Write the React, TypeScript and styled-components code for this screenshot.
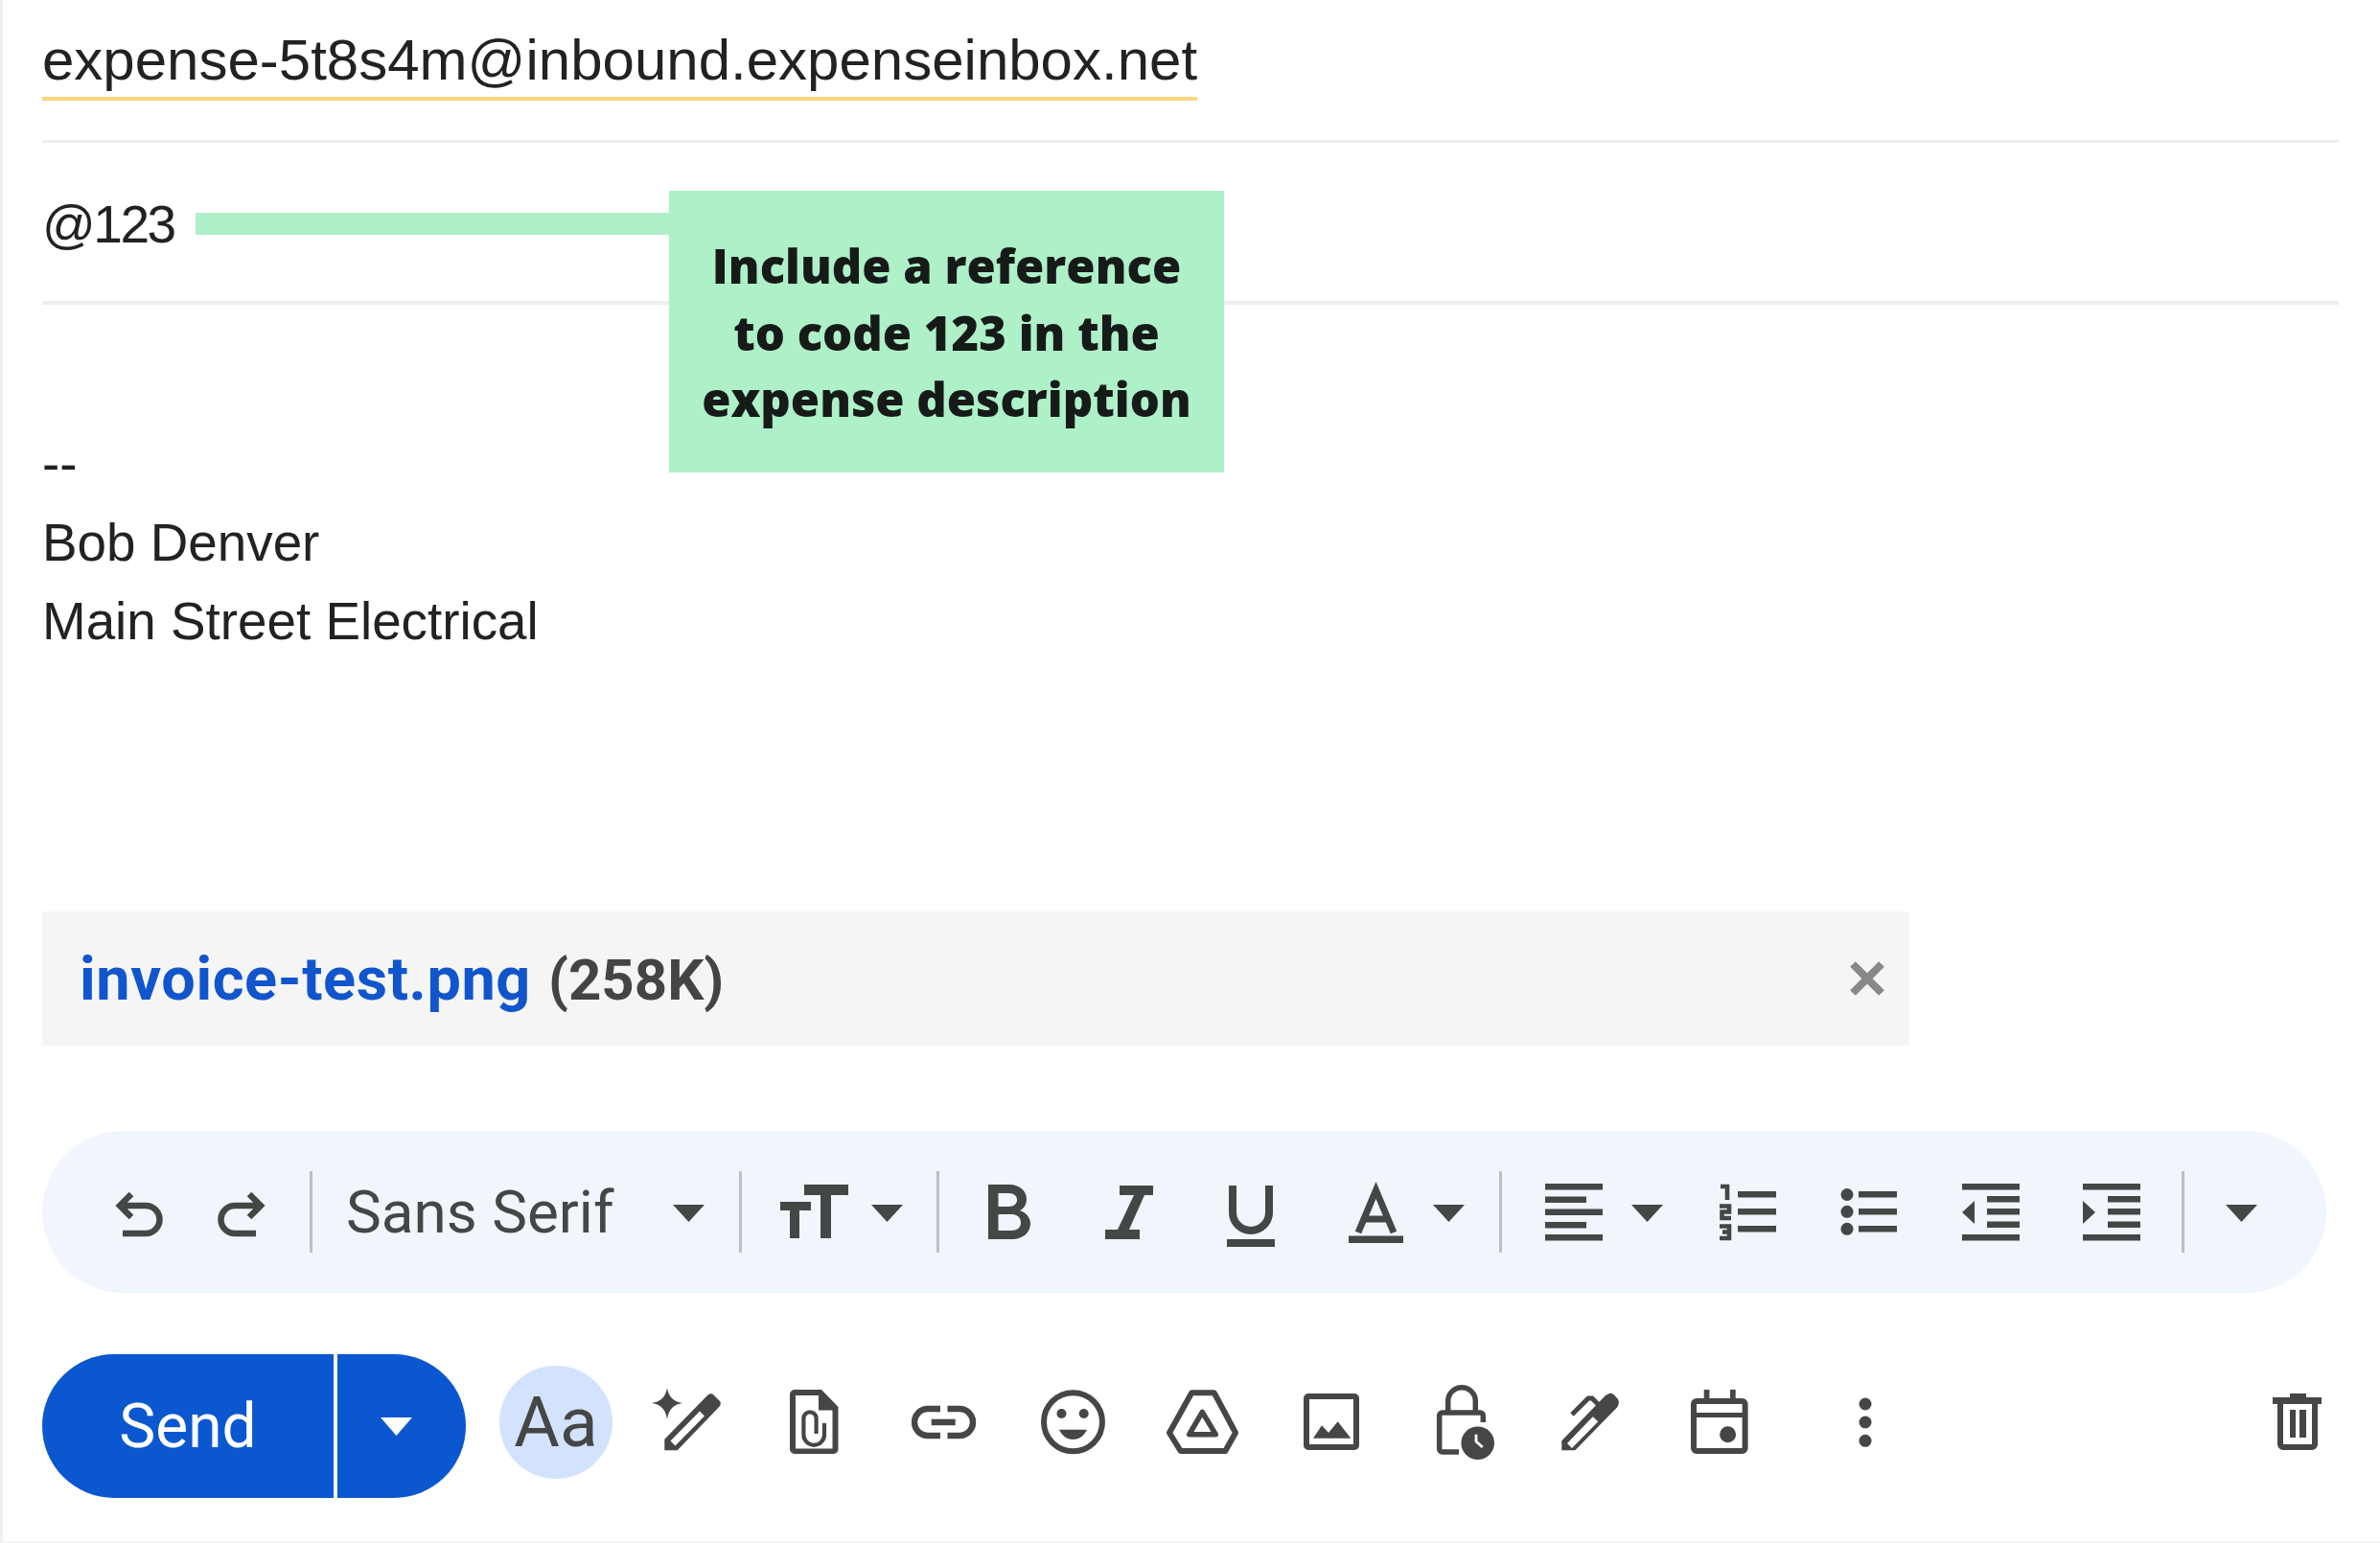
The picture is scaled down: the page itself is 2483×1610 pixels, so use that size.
import React from "react";
import styled, { createGlobalStyle } from "styled-components";

const INK = "#444746";

const GlobalStyle = createGlobalStyle`
    html, body {
        margin: 0;
        padding: 0;
        background: #fff;
    }
`;

const Root = styled.div`
    box-sizing: border-box;
    width: 2483px;
    height: 1610px;
    padding: 0 43px 0 41px;
    border-left: 3px solid #f0f0f0;
    border-bottom: 2px solid #f4f4f4;
    font-family: "Liberation Sans", Arial, sans-serif;
    color: #222;
    overflow: hidden;
`;

const ToRow = styled.div`
    box-sizing: border-box;
    height: 149px;
    padding-top: 31px;
    border-bottom: 3px solid #eceef0;
`;

const Address = styled.span`
    display: inline-block;
    font-size: 60px;
    line-height: 64px;
    padding-bottom: 6px;
    border-bottom: 4px solid #f8d57e;
`;

const SubjectRow = styled.div`
    position: relative;
    box-sizing: border-box;
    height: 169px;
    padding-top: 53px;
    border-bottom: 4px solid #eceef0;
    font-size: 55px;
    letter-spacing: -2.5px;
    line-height: 64px;
`;

const Callout = styled.div`
    position: absolute;
    left: 160px;
    top: 50px;
    display: flex;
    align-items: flex-start;
    letter-spacing: 0;
`;

const CalloutLine = styled.div`
    width: 494px;
    height: 23px;
    margin-top: 23px;
    background: #aef0c8;
`;

const CalloutBox = styled.div`
    box-sizing: border-box;
    width: 579px;
    height: 294px;
    padding-top: 44px;
    background: #aef0c8;
    color: #161a18;
    font-family: "Open Sans", sans-serif;
    font-weight: 800;
    font-size: 49px;
    line-height: 69.5px;
    text-align: center;
`;

const Signature = styled.div`
    margin-top: 125px;
    font-size: 54.8px;
    line-height: 82px;
`;

const Attachment = styled.div`
    box-sizing: border-box;
    display: flex;
    align-items: center;
    justify-content: space-between;
    width: 1948px;
    height: 140px;
    margin-top: 262px;
    padding: 0 26px 0 39px;
    background: #f5f5f5;
    font-family: Roboto, sans-serif;
    font-weight: 700;
    font-size: 60px;
`;

const FileName = styled.span`
    color: #1155cc;
    font-size: 63px;
    letter-spacing: 0.6px;
`;

const FileSize = styled.span`
    color: #444;
    margin-left: 18px;
`;

const Toolbar = styled.div`
    box-sizing: border-box;
    display: flex;
    align-items: center;
    width: 2383px;
    height: 169px;
    margin-top: 89px;
    padding-left: 76px;
    border-radius: 85px;
    background: #f1f5fc;
`;

const ToolIcon = styled.svg<{ $ml?: number }>`
    flex: none;
    height: 100px;
    margin-left: ${p => p.$ml ?? 0}px;
    fill: ${INK};
`;

const Separator = styled.div<{ $ml: number }>`
    flex: none;
    width: 3px;
    height: 85px;
    margin-left: ${p => p.$ml}px;
    background: #bcc1c4;
`;

const FontLabel = styled.div`
    flex: none;
    width: 279px;
    margin-left: 35px;
    font-family: Roboto, sans-serif;
    font-size: 62px;
    color: ${INK};
    white-space: nowrap;
`;

const ActionRow = styled.div`
    display: flex;
    align-items: center;
    height: 150px;
    margin-top: 64px;
`;

const SendGroup = styled.div`
    flex: none;
    display: flex;
    gap: 4px;
    height: 150px;
`;

const SendButton = styled.div`
    display: flex;
    align-items: center;
    justify-content: center;
    width: 304px;
    box-sizing: border-box;
    border-radius: 75px 0 0 75px;
    background: #0b57d0;
    color: #fff;
    font-family: Roboto, sans-serif;
    font-weight: 400;
    font-size: 64px;
`;

const SendMore = styled.div`
    display: flex;
    align-items: center;
    justify-content: center;
    width: 134px;
    padding-right: 12px;
    box-sizing: border-box;
    border-radius: 0 75px 75px 0;
    background: #0b57d0;
`;

const FormatToggle = styled.div`
    flex: none;
    display: flex;
    align-items: center;
    justify-content: center;
    width: 118px;
    height: 118px;
    margin: 0 0 8px 35px;
    border-radius: 50%;
    background: #d3e3fd;
    color: ${INK};
    font-family: Roboto, sans-serif;
    font-size: 73px;
`;

const ActionIcon = styled.svg<{ $ml: number }>`
    flex: none;
    height: 96px;
    margin-left: ${p => p.$ml}px;
    fill: ${INK};
`;

const Line = { fill: "none", stroke: INK } as const;

type ToolProps = { ml?: number };
type ActionProps = { ml: number };

function Caret({ ml }: ToolProps) {
    return (
        <ToolIcon $ml={ml} width={33} viewBox="0 0 33 100">
            <path d="M0 42H33L16.5 60z" />
        </ToolIcon>
    );
}

function UndoIcon() {
    return (
        <ToolIcon width={51} viewBox="0 0 51 100">
            <path {...Line} strokeWidth={6.5} d="M17 31L5 43L17 55M5 43H32a14.5 14.5 0 0 1 0 29H8" />
        </ToolIcon>
    );
}

function RedoIcon({ ml }: ToolProps) {
    return (
        <ToolIcon $ml={ml} width={51} viewBox="0 0 51 100">
            <path {...Line} strokeWidth={6.5} d="M34 31L46 43L34 55M46 43H19a14.5 14.5 0 0 0 0 29H41" />
        </ToolIcon>
    );
}

function SizeIcon({ ml }: ToolProps) {
    return (
        <ToolIcon $ml={ml} width={72} viewBox="0 0 72 100">
            <path d="M26 21H72V32H54V77H43V32H26zM1 39H33V48H21V77H11V48H1z" />
        </ToolIcon>
    );
}

function BoldIcon({ ml }: ToolProps) {
    return (
        <ToolIcon $ml={ml} width={44} viewBox="0 0 44 100">
            <path
                fillRule="evenodd"
                d="M0 21H22C33 21 40 28 40 36C40 42 37 46 33 48C39 50 44 55 44 62C44 71 36 78 25 78H0zM10.5 30V44H21C27 44 30 41 30 37C30 33 27 30 21 30zM10.5 52V69H24C30 69 34 66 34 61C34 55 30 52 24 52z"
            />
        </ToolIcon>
    );
}

function ItalicIcon({ ml }: ToolProps) {
    return (
        <ToolIcon $ml={ml} width={51} viewBox="0 0 51 100">
            <path d="M15 22H50V32H41L25 68H36V78H0V68H13L30 32H15z" />
        </ToolIcon>
    );
}

function UnderlineIcon({ ml }: ToolProps) {
    return (
        <ToolIcon $ml={ml} width={50} viewBox="0 0 50 100">
            <path {...Line} strokeWidth={8} d="M6 22V50a19 19 0 0 0 38 0V22" />
            <rect x={0} y={78} width={50} height={8} />
        </ToolIcon>
    );
}

function TextColorIcon({ ml }: ToolProps) {
    return (
        <ToolIcon $ml={ml} width={57} viewBox="0 0 57 100">
            <path {...Line} strokeWidth={7} d="M10 71L28.5 27L47 71M15 57H42" />
            <rect x={0} y={74.5} width={57} height={7.5} />
        </ToolIcon>
    );
}

function AlignIcon({ ml }: ToolProps) {
    return (
        <ToolIcon $ml={ml} width={60} viewBox="0 0 60 100">
            <rect y={20} width={60} height={6.5} />
            <rect y={33.5} width={43} height={6.5} />
            <rect y={46.5} width={60} height={6.5} />
            <rect y={60} width={43} height={6.5} />
            <rect y={73} width={60} height={6.5} />
        </ToolIcon>
    );
}

function NumberedIcon({ ml }: ToolProps) {
    return (
        <ToolIcon $ml={ml} width={60} viewBox="0 0 60 100">
            <path {...Line} strokeWidth={4.6} d="M1 23H8V37M0 43.5H10V49.5H2.5V56H12M0 64.5H10V70.5H3M10 70.5V77H0" />
            <rect x={19} y={28} width={40} height={6.5} />
            <rect x={19} y={46} width={40} height={6.5} />
            <rect x={19} y={64} width={40} height={6.5} />
        </ToolIcon>
    );
}

function BulletIcon({ ml }: ToolProps) {
    return (
        <ToolIcon $ml={ml} width={60} viewBox="0 0 60 100">
            <circle cx={7} cy={31.5} r={6.5} />
            <circle cx={7} cy={49.3} r={6.5} />
            <circle cx={7} cy={67.3} r={6.5} />
            <rect x={19} y={28} width={40} height={6.5} />
            <rect x={19} y={46} width={40} height={6.5} />
            <rect x={19} y={64} width={40} height={6.5} />
        </ToolIcon>
    );
}

function IndentIcon({ ml, less }: ToolProps & { less?: boolean }) {
    return (
        <ToolIcon $ml={ml} width={60} viewBox="0 0 60 100">
            <rect y={20} width={60} height={6.5} />
            <rect x={26} y={33} width={34} height={6.5} />
            <rect x={26} y={46} width={34} height={6.5} />
            <rect x={26} y={59.5} width={34} height={6.5} />
            <rect y={73} width={60} height={6.5} />
            <path d={less ? "M13 38V62L0 50z" : "M0 38V62L13 50z"} />
        </ToolIcon>
    );
}

function PencilSparkIcon({ ml }: ActionProps) {
    return (
        <ActionIcon $ml={ml} width={73} viewBox="0 0 73 96">
            <path d="M16 8Q18 22 32 24Q18 26 16 41Q14 26 0 24Q14 22 16 8z" />
            <path
                fillRule="evenodd"
                d="M13.3 61.7L57.3 16.7Q61 13 64 15L71 22Q73 25 70 28.3L26.7 73.3H13.3zM19.5 63.5L24.5 68.5L55 37.5L50 32.5z"
            />
        </ActionIcon>
    );
}

function AttachIcon({ ml }: ActionProps) {
    return (
        <ActionIcon $ml={ml} width={51} viewBox="0 0 51 96">
            <path
                fillRule="evenodd"
                d="M5 10H33L50.5 28V72a5 5 0 0 1 -5 5H5a5 5 0 0 1 -5 -5V15a5 5 0 0 1 5 -5zM6 16V71.5H44.5V31.5H30V16z"
            />
            <path {...Line} strokeWidth={4.2} d="M36 45V57a10.8 10.8 0 0 1 -21.6 0V40a6.6 6.6 0 0 1 13.2 0V56" />
        </ActionIcon>
    );
}

function LinkIcon({ ml }: ActionProps) {
    return (
        <ActionIcon $ml={ml} width={68} viewBox="0 0 68 96">
            <path {...Line} strokeWidth={6.5} d="M30 30H17a14 14 0 0 0 0 28H30M37.5 30H50a14 14 0 0 1 0 28H37.5" />
            <rect x={20.7} y={40.7} width={25} height={6.5} />
        </ActionIcon>
    );
}

function EmojiIcon({ ml }: ActionProps) {
    return (
        <ActionIcon $ml={ml} width={67} viewBox="0 0 67 96">
            <circle {...Line} strokeWidth={6} cx={33.5} cy={43.7} r={30.5} />
            <circle cx={21.5} cy={35} r={5} />
            <circle cx={44.7} cy={35} r={5} />
            <path d="M19 51.7H48C45 58 40 62 33.5 62C27 62 22 58 19 51.7z" />
        </ActionIcon>
    );
}

function DriveIcon({ ml }: ActionProps) {
    return (
        <ActionIcon $ml={ml} width={76} viewBox="0 0 76 96">
            <path {...Line} strokeWidth={6} strokeLinejoin="round" d="M26.3 13.3H49.7L72 55L61.3 74H14.7L3 55z" />
            <path {...Line} strokeWidth={5.5} strokeLinejoin="round" d="M37.3 33.3L23.7 56.7H51.3z" />
        </ActionIcon>
    );
}

function PhotoIcon({ ml }: ActionProps) {
    return (
        <ActionIcon $ml={ml} width={58} viewBox="0 0 58 96">
            <rect {...Line} strokeWidth={6} x={3} y={17} width={52} height={53} rx={2} />
            <path d="M10 60.7L19 47.3L26 55L35.7 43.3L49.3 60.7z" />
        </ActionIcon>
    );
}

function LockClockIcon({ ml }: ActionProps) {
    return (
        <ActionIcon $ml={ml} width={61} viewBox="0 0 61 96">
            <path {...Line} strokeWidth={5.5} d="M12.7 34V22a14.3 14.3 0 0 1 28.6 0V34" />
            <path {...Line} strokeWidth={5.5} d="M49.3 44V37a3 3 0 0 0 -3 -3H6.7a3 3 0 0 0 -3 3V72a3 3 0 0 0 3 3H24" />
            <circle cx={43.7} cy={65.7} r={17.3} />
            <path fill="none" stroke="#fff" strokeWidth={2.8} d="M42 56.7V64L48.7 70" />
        </ActionIcon>
    );
}

function PenIcon({ ml }: ActionProps) {
    return (
        <ActionIcon $ml={ml} width={60} viewBox="0 0 60 96">
            <path
                fillRule="evenodd"
                d="M0.3 63.3L46 16L50 14Q52.7 13 55 15.5L59 20Q61 23.5 58.3 28.3L14.3 73.3H0.3zM6 66L11 71L38.3 43.3L32.7 38.3z"
            />
            <path {...Line} strokeWidth={5} d="M11 36L28 19H32L38 25" />
        </ActionIcon>
    );
}

function CalendarIcon({ ml }: ActionProps) {
    return (
        <ActionIcon $ml={ml} width={60} viewBox="0 0 60 96">
            <rect {...Line} strokeWidth={6} x={3} y={22} width={53.6} height={52} rx={3} />
            <rect x={13.7} y={10} width={5.7} height={10} />
            <rect x={41} y={10} width={5.7} height={10} />
            <rect x={1} y={34} width={57} height={5} />
            <circle cx={38.6} cy={56.7} r={8.5} />
        </ActionIcon>
    );
}

function MoreIcon({ ml }: ActionProps) {
    return (
        <ActionIcon $ml={ml} width={14} viewBox="0 0 14 96">
            <circle cx={7} cy={25} r={6.5} />
            <circle cx={7} cy={44} r={6.5} />
            <circle cx={7} cy={63.3} r={6.5} />
        </ActionIcon>
    );
}

function TrashIcon({ ml }: ActionProps) {
    return (
        <ActionIcon $ml={ml} width={51} viewBox="0 0 51 96">
            <rect x={18} y={14} width={17} height={5} />
            <rect x={0} y={18} width={51} height={7} />
            <path {...Line} strokeWidth={6} d="M8 25V67a3 3 0 0 0 3 3H41a3 3 0 0 0 3 -3V25" />
            <rect x={18} y={31} width={6} height={29} />
            <rect x={28} y={31} width={7} height={29} />
        </ActionIcon>
    );
}

export default function App() {
    return (
        <Root>
            <GlobalStyle />
            <ToRow>
                <Address>expense-5t8s4m@inbound.expenseinbox.net</Address>
            </ToRow>
            <SubjectRow>
                @123
                <Callout>
                    <CalloutLine />
                    <CalloutBox>
                        Include a reference
                        <br />
                        to code 123 in the
                        <br />
                        expense description
                    </CalloutBox>
                </Callout>
            </SubjectRow>
            <Signature>
                --
                <br />
                Bob Denver
                <br />
                Main Street Electrical
            </Signature>
            <Attachment>
                <div>
                    <FileName>invoice-test.png</FileName>
                    <FileSize>(258K)</FileSize>
                </div>
                <svg width={36} height={36} viewBox="0 0 36 36">
                    <path fill="none" stroke="#888" strokeWidth={8} d="M3 3L33 33M33 3L3 33" />
                </svg>
            </Attachment>
            <Toolbar>
                <UndoIcon />
                <RedoIcon ml={55} />
                <Separator $ml={46} />
                <FontLabel>Sans Serif</FontLabel>
                <Caret ml={62} />
                <Separator $ml={36} />
                <SizeIcon ml={39} />
                <Caret ml={24} />
                <Separator $ml={35} />
                <BoldIcon ml={51} />
                <ItalicIcon ml={78} />
                <UnderlineIcon ml={76} />
                <TextColorIcon ml={77} />
                <Caret ml={31} />
                <Separator $ml={36} />
                <AlignIcon ml={45} />
                <Caret ml={30} />
                <NumberedIcon ml={59} />
                <BulletIcon ml={66} />
                <IndentIcon ml={67} less />
                <IndentIcon ml={66} />
                <Separator $ml={43} />
                <Caret ml={43} />
            </Toolbar>
            <ActionRow>
                <SendGroup>
                    <SendButton>Send</SendButton>
                    <SendMore>
                        <svg width={33} height={19} viewBox="0 0 33 19">
                            <path fill="#fff" d="M0 0H33L16.5 19z" />
                        </svg>
                    </SendMore>
                </SendGroup>
                <FormatToggle>Aa</FormatToggle>
                <PencilSparkIcon ml={41} />
                <AttachIcon ml={71} />
                <LinkIcon ml={76} />
                <EmojiIcon ml={67} />
                <DriveIcon ml={64} />
                <PhotoIcon ml={67} />
                <LockClockIcon ml={80} />
                <PenIcon ml={70} />
                <CalendarIcon ml={75} />
                <MoreIcon ml={115} />
                <TrashIcon ml={418} />
            </ActionRow>
        </Root>
    );
}
